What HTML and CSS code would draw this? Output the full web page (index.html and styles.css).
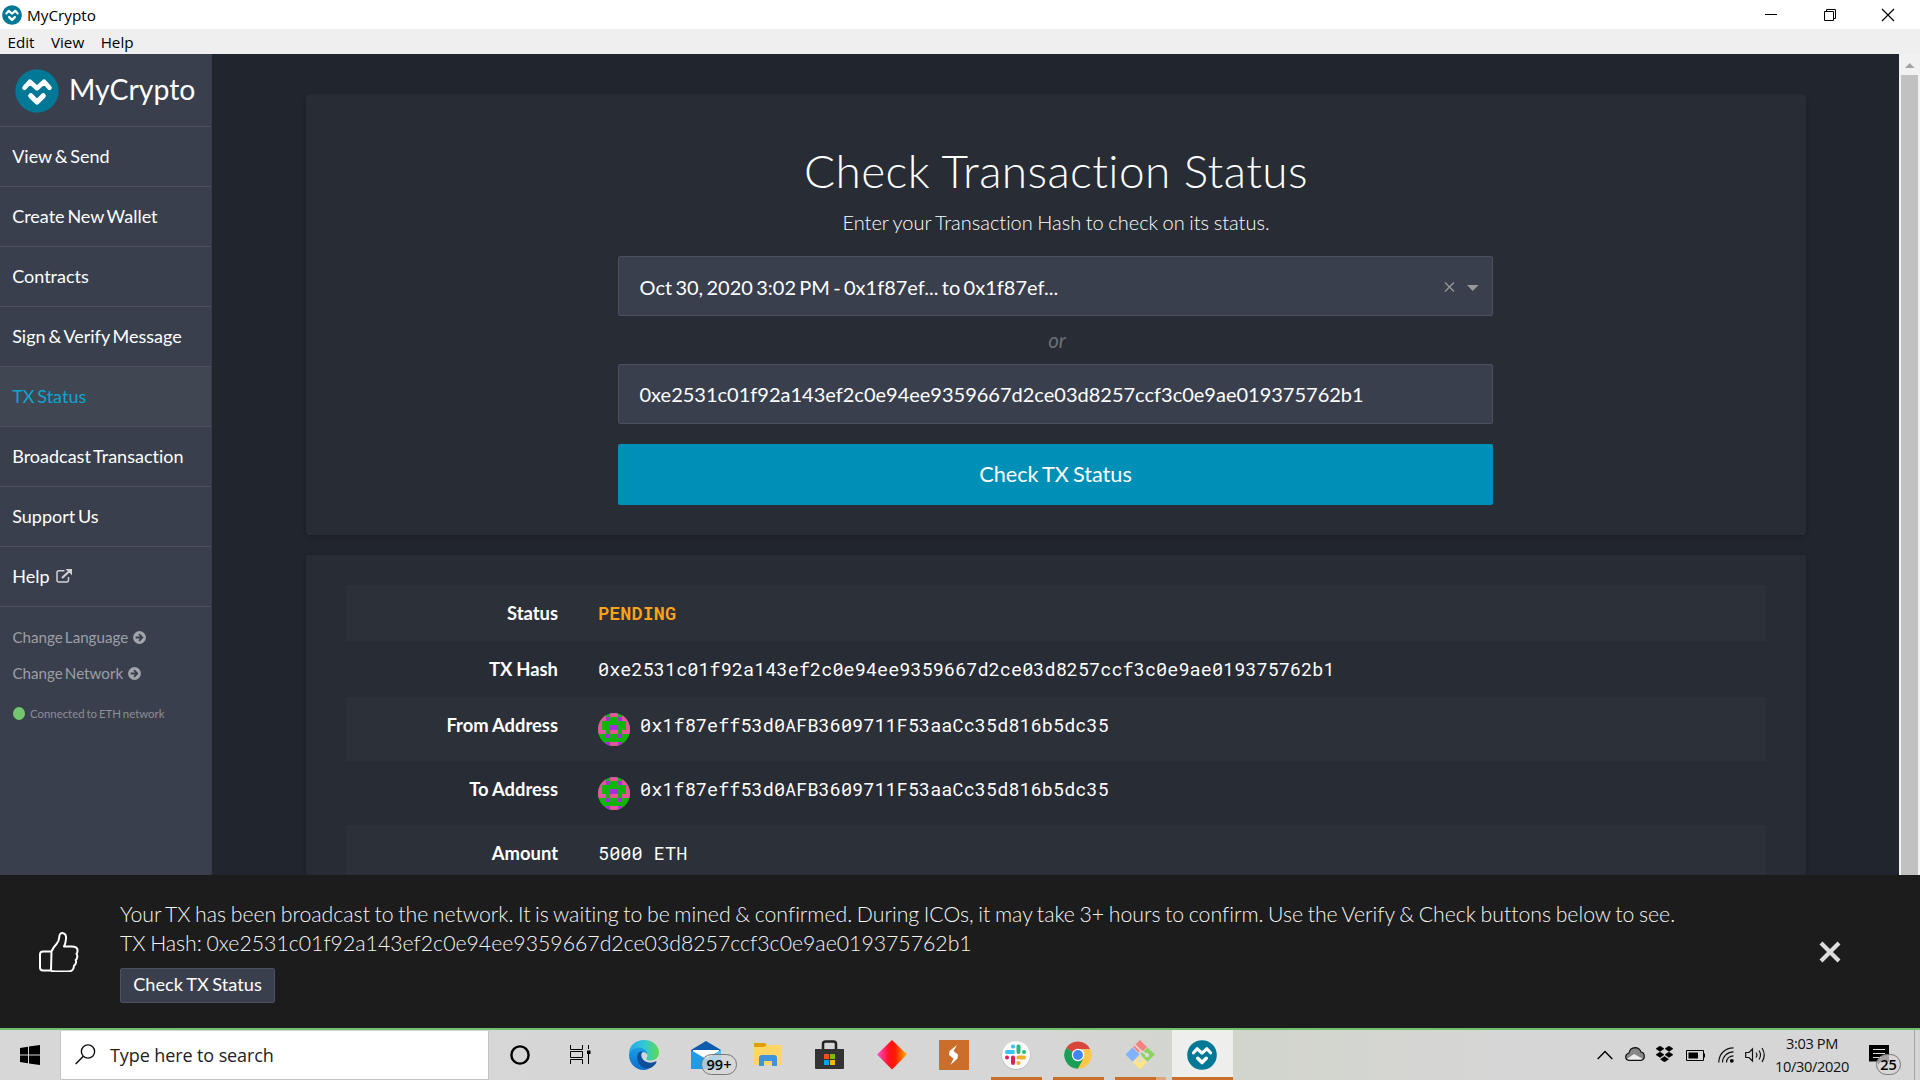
FILE: index.html
```html
<!DOCTYPE html>
<html lang="en">
<head>
<meta charset="utf-8">
<title>MyCrypto</title>
<link rel="stylesheet" href="styles.css">
</head>
<body>
<svg class="defs" aria-hidden="true">
  <symbol id="logo" viewBox="0 0 44 44">
    <circle cx="22" cy="22" r="21.7" fill="#007896"/>
    <path d="M9.500 18.800l5.400-6 7.100 6.400 7.100-6.400 5.400 6" fill="none" stroke="#fff" stroke-width="4.600" stroke-linecap="round" stroke-linejoin="round"/>
    <path d="M15.800 26.800l6.200 6.200 6.200-6.200" fill="none" stroke="#fff" stroke-width="5.200" stroke-linecap="round" stroke-linejoin="round"/>
  </symbol>
  <symbol id="circle-arrow" viewBox="0 0 13 13">
    <circle cx="6.500" cy="6.500" r="6.400" fill="#a2a5ab"/>
    <path d="M2.600 6.500h6.400M6 3.200l3.300 3.300L6 9.800" fill="none" stroke="#3a3f4d" stroke-width="1.800"/>
  </symbol>
  <symbol id="identicon" viewBox="0 0 8 8" preserveAspectRatio="none">
    <g shape-rendering="crispEdges">
    <path fill="#10b50a" d="M0 0h8v8H0z"/>
    <path fill="#e7549b" d="M3 0h2v1H3zM0 0h1v5H0zM7 0h1v5H7zM1 0h1v2H1zM6 0h1v2H6zM1 4h1v1H1zM6 4h1v1H6zM3 4h2v1H3zM3 7h2v1H3z"/>
    <path fill="#a530e0" d="M2 1h1v1H2zM5 1h1v1H5zM3 3h2v1H3zM2 5h1v1H2zM5 5h1v1H5zM2 7h1v1H2zM5 7h1v1H5z"/>
    </g>
  </symbol>
</svg>
<header class="titlebar">
  <svg class="titlebar-logo"><use href="#logo"/></svg>
  <span class="titlebar-name">MyCrypto</span>
  <div class="window-buttons">
    <svg viewBox="0 0 14 14"><path d="M1 6.500h12" stroke="#000"/></svg>
    <svg viewBox="0 0 14 14"><path d="M1.500 3.500h9v9h-9zM3.500 3.500v-2h9v9h-2" fill="none" stroke="#000"/></svg>
    <svg viewBox="0 0 14 14"><path d="M1 1l12 12M13 1L1 13" stroke="#000" stroke-width="1.200"/></svg>
  </div>
</header>
<nav class="menubar"><span>Edit</span><span>View</span><span>Help</span></nav>
<div class="app">
  <aside class="sidebar">
    <div class="brand"><svg class="brand-logo"><use href="#logo"/></svg><span class="brand-name">MyCrypto</span></div>
    <a class="nav-item">View &amp; Send</a>
    <a class="nav-item">Create New Wallet</a>
    <a class="nav-item">Contracts</a>
    <a class="nav-item">Sign &amp; Verify Message</a>
    <a class="nav-item active">TX Status</a>
    <a class="nav-item">Broadcast Transaction</a>
    <a class="nav-item">Support Us</a>
    <a class="nav-item">Help<svg class="external" viewBox="0 0 16 14"><path d="M8.500 1.800H3q-2 0-2 2v7.200q0 2 2 2h7.500q2 0 2-2V8" fill="none" stroke="#d0d2d6" stroke-width="1.500"/><path d="M6 9l7-6.500" stroke="#d0d2d6" stroke-width="2.200"/><path d="M9.500 0H16v6.300z" fill="#d0d2d6"/></svg></a>
    <div class="sub-items">
      <a class="sub-item">Change Language<svg><use href="#circle-arrow"/></svg></a>
      <a class="sub-item">Change Network<svg><use href="#circle-arrow"/></svg></a>
    </div>
    <div class="connection"><i class="dot"></i>Connected to ETH network</div>
  </aside>
  <main class="content">
    <section class="card check">
      <h1>Check Transaction Status</h1>
      <p class="subtitle">Enter your Transaction Hash to check on its status.</p>
      <div class="form">
        <div class="field select"><span>Oct 30, 2020 3:02 PM - 0x1f87ef... to 0x1f87ef...</span>
          <svg class="select-icons" viewBox="0 0 36 14"><path d="M2 2.500l9 9M11 2.500l-9 9" stroke="#999" stroke-width="1.300"/><path d="M24 5h11.500l-5.750 6z" fill="#999"/></svg></div>
        <em class="or">or</em>
        <div class="field">0xe2531c01f92a143ef2c0e94ee9359667d2ce03d8257ccf3c0e9ae019375762b1</div>
        <div class="primary">Check TX Status</div>
      </div>
    </section>
    <section class="card details">
      <div class="row shade"><b>Status</b><code class="pending">PENDING</code></div>
      <div class="row"><b>TX Hash</b><code>0xe2531c01f92a143ef2c0e94ee9359667d2ce03d8257ccf3c0e9ae019375762b1</code></div>
      <div class="row tall shade"><b>From Address</b><svg class="identicon"><use href="#identicon"/></svg><code>0x1f87eff53d0AFB3609711F53aaCc35d816b5dc35</code></div>
      <div class="row tall"><b>To Address</b><svg class="identicon"><use href="#identicon"/></svg><code>0x1f87eff53d0AFB3609711F53aaCc35d816b5dc35</code></div>
      <div class="row shade"><b>Amount</b><code>5000 ETH</code></div>
    </section>
  </main>
  <div class="scrollbar"><svg viewBox="0 0 21 21"><path d="M6 14h9.500l-4.750-5z" fill="#a3a3a3"/></svg><div class="thumb"></div></div>
</div>
<section class="toast">
  <svg class="thumb-up" viewBox="0 0 40 40"><path fill="none" stroke="#fff" stroke-width="2" stroke-linejoin="round" d="M12.500 19.500H4q-3 0-3 3v13q0 3 3 3h8zM12.500 19.500q2-4.500 5-7.500 2.500-3 2.700-6.500.2-4.700 3.300-4.500 4.200.8 3.500 6-.5 5-2 7.500h7.500q6.500 0 6 4.500 0 2-1 2.800 1.200 1.500.7 3.500-.4 2-1.500 2.700.9 2-.2 4-.6 1.200-1.500 1.700-.3 5.800-6 5.800H17q-3 0-5-.5"/></svg>
  <div class="toast-body">
    <p>Your TX has been broadcast to the network. It is waiting to be mined &amp; confirmed. During ICOs, it may take 3+ hours to confirm. Use the Verify &amp; Check buttons below to see.</p>
    <p>TX Hash: 0xe2531c01f92a143ef2c0e94ee9359667d2ce03d8257ccf3c0e9ae019375762b1</p>
    <div class="toast-button">Check TX Status</div>
  </div>
  <svg class="toast-close" viewBox="0 0 22 22"><path d="M2 2l18 18M20 2L2 20" stroke="#ddd" stroke-width="4.200"/></svg>
</section>
<footer class="taskbar">
  <div class="start"><svg viewBox="0 0 20 20"><path d="M0 3l8-1.200V9.500H0zM9 1.600L20 0v9.500H9zM0 10.500h8v7.700L0 17zM9 10.500h11V20L9 18.400z"/></svg></div>
  <div class="search"><svg viewBox="0 0 21 21"><circle cx="13" cy="7.500" r="6.600" fill="none" stroke="#111" stroke-width="1.400"/><path d="M8.300 12.300L.7 20" stroke="#111" stroke-width="1.500"/></svg><span>Type here to search</span></div>
  <div class="apps">
    <div class="slot"><svg viewBox="0 0 30 30"><circle cx="15" cy="15" r="8.600" fill="none" stroke="#000" stroke-width="2.400"/></svg></div>
    <div class="slot"><svg viewBox="0 0 30 30"><path d="M3.500 5v4.500h12V5M3.500 24v-4.500h12V24M3.500 11.500h12v6h-12zM21.500 5v4M21.500 14v10" fill="none" stroke="#000"/><path d="M20 10.500h3.500v3.500H20z"/></svg></div>
    <div class="slot"><svg viewBox="0 0 30 30">
      <defs><linearGradient id="edge-top"><stop stop-color="#27a8e8"/><stop offset=".5" stop-color="#31c7d8"/><stop offset="1" stop-color="#5bdc50"/></linearGradient><linearGradient id="edge-left" x2="0" y2="1"><stop stop-color="#1b9de2"/><stop offset="1" stop-color="#0b6fcb"/></linearGradient></defs>
      <path fill="url(#edge-top)" d="M0 14C0 5 7 0 15 0c9 0 15 6 15 12.500 0 5-4 8-8.500 8-3.500 0-5-1.300-3.600-3 1.800-3.500-.5-7.500-6.400-7.500C6 10 2 11.500 0 14z"/>
      <path fill="url(#edge-left)" d="M0 15C1 10 6 7.500 10 7.700c5 .3 8.500 3.800 8.400 7.300-1-3-5-4-6.500-1C9 20 13 27 20 28.800 17 30 16 30 15 30 6 30 0 23 0 15z"/>
      <path fill="#0e4f9c" d="M9 13.500C6 21 12 29 19.500 28.800c3.500-1 6.500-3.500 8-6.500.4-.8-.2-1.100-1-.7C20 24.500 12.500 21 12.300 15c0-2 .7-3 1.500-3.500-2 0-4 .5-4.800 2z"/></svg></div>
    <div class="slot mail"><svg viewBox="0 0 30 30"><path fill="#0f5cae" d="M0 10L15 1l15 9v6H0z"/><path fill="#fff" d="M2 10h26v10H2z"/><path fill="#1e9de6" d="M0 10l15 9 15-9v19H0z"/><path fill="#55c3f3" d="M30 10v19L12 17l3 2z"/></svg><span class="badge">99+</span></div>
    <div class="slot"><svg viewBox="0 0 30 30"><path fill="#e39d07" d="M1 3h11l2 2.500V10H1z"/><path fill="#ffd664" d="M1 7h10l3-2h14.500v20H1z"/><path fill="#3f92dc" d="M6 26V18q0-3 3-3h12q3 0 3 3v8h-5v-5h-8v5z"/></svg></div>
    <div class="slot"><svg viewBox="0 0 30 30"><path fill="none" stroke="#222" stroke-width="2.500" d="M8 10V4q0-2.500 2.500-2.500h8Q21 1.500 21 4v6"/><path fill="#333" d="M0 9h29v19q0 1-1 1H1q-1 0-1-1z"/><path fill="#f25022" d="M9 14h5v5H9z"/><path fill="#7fba00" d="M15 14h5v5h-5z"/><path fill="#00a4ef" d="M9 20h5v5H9z"/><path fill="#ffb900" d="M15 20h5v5h-5z"/></svg></div>
    <div class="slot"><svg viewBox="0 0 30 30"><defs><linearGradient id="gem"><stop stop-color="#ff4fd8"/><stop offset=".4" stop-color="#ff1020"/><stop offset=".6" stop-color="#ff1800"/><stop offset="1" stop-color="#ffb400"/></linearGradient></defs><path fill="url(#gem)" d="M15 0l15 14.500L15 29.500 0 14.500z"/></svg></div>
    <div class="slot"><svg viewBox="0 0 30 30"><path fill="#cc6e2b" d="M0 0h30v30H0z"/><path fill="#fff" d="M18 5l-7.500 6-.5 4 4.500 3.500-3 6.500 7-6.500.5-4-4.500-3.500z"/></svg></div>
    <div class="slot running"><svg viewBox="0 0 30 30"><circle cx="15" cy="15.500" r="14.500" fill="#bcbcbc"/><circle cx="15" cy="15" r="14" fill="#fafafa"/><g stroke-width="4" stroke-linecap="round"><path d="M6 12h6M12 6.500v0" stroke="#36c5f0"/><path d="M17.500 6.500v5.500M23 12v0" stroke="#2eb67d"/><path d="M17.500 17.500H23M17.500 23v0" stroke="#ecb22e"/><path d="M12 17.500V23M6 17.500v0" stroke="#e01e5a"/></g></svg></div>
    <div class="slot running"><svg viewBox="0 0 30 30"><path fill="#d9453b" d="M15 15L3.200 8A13.700 13.700 0 0 1 27.200 9.200H15z"/><path fill="#fdc84a" d="M15 15l12.200-5.800A13.700 13.700 0 0 1 15 28.700l-1-4z"/><path fill="#1a9e58" d="M15 15L3.200 8A13.700 13.700 0 0 0 15 28.700L20.500 19z"/><path fill="#fdc84a" d="M20.500 9.200h6.700A13.700 13.700 0 0 1 15 28.700L20.700 18z"/><circle cx="15" cy="15" r="6.200" fill="#fff"/><circle cx="15" cy="15" r="5" fill="#4285f4"/></svg></div>
    <div class="slot running stacked"><svg viewBox="0 0 30 30"><path fill="#f88080" d="M15 0l7 7-7 7-7-7z"/><path fill="#80b3ff" d="M7.500 7.500l7 7-7 7-7-7z"/><path fill="#8dd35f" d="M22.500 7.500l7.500 7-7.500 7-7-7z"/><path fill="#ffe680" d="M15 15.500l7 7-7 7-7-7z"/><path d="M10 5l5 5v12M15 10l7 5" fill="none" stroke="#dcdcd8" stroke-width="1.600"/><circle cx="15" cy="21" r="2.200" fill="#dcdcd8"/><circle cx="22" cy="15" r="2.200" fill="#dcdcd8"/></svg></div>
    <div class="slot running current"><svg><use href="#logo"/></svg></div>
  </div>
  <div class="tray">
    <svg class="chevron" viewBox="0 0 16 10"><path d="M.7 9L8 1.500 15.300 9" fill="none" stroke="#000" stroke-width="1.400"/></svg>
    <svg class="cloud" viewBox="0 0 20 14"><path d="M4 13.300Q.7 13 .7 9.800.8 7 4 6q1-5 6-5.300 4.500 0 6 4.300 3.300.6 3.300 4.200 0 3.800-3.500 4.100z" fill="#888"/><path d="M2 12l7-5 9 5-2 1H4z" fill="#eee"/><path d="M4 13.300Q.7 13 .7 9.800.8 7 4 6q1-5 6-5.300 4.500 0 6 4.300 3.300.6 3.300 4.200 0 3.800-3.500 4.100z" fill="none" stroke="#111" stroke-width="1.200"/></svg>
    <svg class="dropbox" viewBox="0 0 19 16"><path d="M5 0l4 2.700-4 2.700-4-2.700zM14 0l4 2.700-4 2.700-4-2.700zM5 6l4 2.700-4 2.700-4-2.700zM14 6l4 2.700-4 2.700-4-2.700zM9.500 10.500l4 2.700-4 2.800-4-2.800z" stroke="#000" stroke-width=".5"/></svg>
    <svg class="battery" viewBox="0 0 19 11"><path d="M.5.500h17v10H.5z" fill="none" stroke="#000"/><path d="M2.500 2.500h9.500v6H2.500zM18 3.500h1v4h-1z"/></svg>
    <svg class="wifi" viewBox="0 0 16 16"><g fill="none" stroke="#111" stroke-width="1.200"><path d="M.8 15.500C.8 7 7 .8 15.500.8"/><path d="M4.500 15.500c0-6 5-10.700 11-10.700"/><path d="M8.500 15.500c0-4 3-6.700 7-6.700"/></g><circle cx="13.800" cy="13.800" r="1.900"/></svg>
    <svg class="speaker" viewBox="0 0 21 16"><path d="M.7 5.500H4L7.500 2v12L4 10.500H.7zM11 5.500q1.800 2.500 0 5M14 3.500q3 4.500 0 9M17 1q4.500 7 0 14" fill="none" stroke="#111" stroke-width="1.200"/></svg>
    <div class="clock"><span>3:03 PM</span><span>10/30/2020</span></div>
    <div class="notifications"><svg viewBox="0 0 20 20"><path d="M0 0h20v16.500H12l-3 3.500v-3.500H0z"/><path d="M4 4.500h12M4 8.500h12M4 12.500h8" stroke="#ddd" stroke-width="1.200"/></svg><span class="badge">25</span></div>
    <div class="show-desktop"></div>
  </div>
</footer>
</body>
</html>
```
FILE: styles.css
```css
* { box-sizing: border-box; }
body {
  margin: 0;
  width: 1920px;
  height: 1080px;
  overflow: hidden;
  display: flex;
  flex-direction: column;
  font-family: Lato, sans-serif;
  font-variant-ligatures: no-common-ligatures;
  color: #fff;
  background: #21252d;
}
svg { display: block; flex: none; }
p, h1 { margin: 0; font-weight: 300; }
.defs { display: none; }

/* Window chrome */
.titlebar {
  display: flex;
  align-items: center;
  flex: none;
  height: 29px;
  padding: 0 25px 0 2px;
  background: #fff;
  color: #000;
  font: 15.3px/29px "Open Sans", sans-serif;
}
.titlebar-logo { width: 20px; height: 20px; }
.titlebar-name { margin-left: 5px; padding-top: 2px; }
.window-buttons { display: flex; gap: 45px; margin-left: auto; }
.window-buttons svg { width: 14px; height: 14px; }
.window-buttons svg:nth-child(2) { margin-right: -1px; }
.menubar {
  display: flex;
  flex: none;
  gap: 16.5px;
  height: 25px;
  padding-left: 7.5px;
  background: #efefef;
  color: #000;
  font: 15.2px/27px "Open Sans", sans-serif;
}

.app { display: flex; height: 821px; flex: none; overflow: hidden; }

/* Sidebar */
.sidebar {
  width: 212px;
  flex: none;
  background: #3a3f4d;
  border-right: 1px solid #353a47;
  word-spacing: -1.8px;
}
.brand {
  display: flex;
  align-items: center;
  gap: 10px;
  height: 73px;
  padding: 2px 0 0 15px;
  border-bottom: 1px solid #4d505f;
}
.brand-logo { width: 44px; height: 44px; }
.brand-name { font-size: 28.4px; line-height: 40px; padding-bottom: 5px; }
.nav-item {
  display: flex;
  align-items: center;
  height: 60px;
  padding: 0 12px 1px 12.2px;
  border-bottom: 1px solid #4d505f;
  font-size: 18px;
}
.nav-item.active { background: #414653; color: #0ea5cd; }
.external { width: 16px; height: 14px; margin-left: 6px; }
.sub-items { padding-top: 12px; color: #9c9fa6; }
.sub-item {
  display: flex;
  align-items: center;
  height: 36px;
  padding-left: 12.5px;
  font-size: 15.15px;
}
.sub-item svg { width: 13px; height: 13px; margin-left: 5px; }
.connection {
  display: flex;
  align-items: center;
  gap: 5px;
  height: 16px;
  margin-top: 14px;
  padding-left: 13px;
  font-size: 11.4px;
  word-spacing: -1px;
  color: #8b8e96;
}
.dot { width: 12px; height: 13px; border-radius: 50%; background: #73c66d; }

/* Content */
.content { flex: 1; padding: 40px 93px 0 94px; background: #21252d; }
.card {
  background: #282c35;
  border-radius: 3px;
  box-shadow: 0 2px 5px rgba(0, 0, 0, .2);
}
.check { height: 441px; padding-top: 46px; text-align: center; }
h1 { font-size: 46px; line-height: 61px; letter-spacing: .4px; }
.subtitle { margin-top: 6px; font-size: 20px; line-height: 30px; word-spacing: -.9px; }
.form {
  display: flex;
  flex-direction: column;
  width: 875px;
  margin: 19px 0 0 312px;
  word-spacing: -1.5px;
  text-align: left;
}
.field {
  display: flex;
  align-items: center;
  height: 60px;
  padding: 0 13px 0 20.5px;
  border: 1px solid #4b5063;
  border-radius: 2px;
  background: #3a3f4d;
  font-size: 20px;
}
.select { justify-content: space-between; padding-top: 1px; word-spacing: -1.8px; }
.select-icons { width: 36px; height: 14px; }
.or { height: 48px; padding-left: 3px; font-size: 20.5px; line-height: 48px; text-align: center; color: #6b6f76; }
.primary {
  height: 61px;
  margin-top: 20px;
  border-radius: 2px;
  background: #0090b7;
  font-size: 21.7px;
  line-height: 60px;
  text-align: center;
}
.details { height: 600px; margin-top: 20px; padding: 30px 40px 0; }
.row {
  display: grid;
  grid-template-columns: 212px auto 1fr;
  height: 56px;
  line-height: 56px;
}
.row b { text-align: right; font-size: 18.4px; word-spacing: -.5px; }
.row.tall { height: 64px; }
.shade { background: #2c3039; }
code {
  margin-left: 40px;
  font-family: "Roboto Mono", "DejaVu Sans Mono", monospace;
  font-size: 18.5px;
  letter-spacing: .06px;
}
.identicon { width: 32px; height: 33px; margin: 16px 0 0 40px; border-radius: 50%; }
.identicon + code { margin-left: 10px; }
.pending { color: #ffa31a; font-weight: 600; }

/* Scrollbar */
.scrollbar { width: 21px; flex: none; padding-left: 2px; background: #f1f1f1; }
.scrollbar svg { width: 21px; height: 21px; margin-left: -2px; }
.thumb { width: 17px; height: 800px; background: #c1c1c1; }

/* Toast */
.toast {
  display: flex;
  flex: none;
  height: 155px;
  padding: 25px 79px 0 39px;
  border-bottom: 2px solid #6cc16a;
  background: #1c1c1c;
}
.thumb-up { width: 40px; height: 40px; margin: 32px 41px 0 0; }
.toast-body p { font-size: 21.25px; line-height: 29px; word-spacing: -1.18px; white-space: nowrap; color: #f4f4f4; }
.toast-button {
  width: 155px;
  height: 35px;
  margin-top: 10px;
  border: 1px solid #4b5063;
  border-radius: 2px;
  background: #3a3f4d;
  font-size: 18.2px;
  line-height: 31px;
  word-spacing: -1px;
  text-align: center;
}
.toast-close { width: 22px; height: 22px; margin: 41px 0 0 auto; }

/* Taskbar */
.taskbar {
  display: flex;
  flex: none;
  height: 50px;
  background: linear-gradient(90deg, #d7d7d7 0, #d6d6d6 1040px, #d2d5cc 1250px, #d6d6d6 1500px);
  color: #111;
  font-family: "Open Sans", sans-serif;
}
.start { width: 60px; padding: 15px 0 0 20px; }
.start svg { width: 20px; height: 20px; }
.search {
  display: flex;
  width: 429px;
  height: 49px;
  margin-top: 1px;
  padding: 13px 0 0 14px;
  border: 1px solid #c4c4c4;
  border-top: 0;
  background: #fff;
  font-size: 18px;
  line-height: 22px;
  letter-spacing: -.1px;
  color: #222;
}
.search svg { width: 21px; height: 21px; margin-right: 14px; }
.apps { display: grid; grid-template-columns: repeat(12, 62px); }
.slot { position: relative; display: flex; justify-content: center; padding-top: 10px; }
.slot svg { width: 30px; height: 30px; }
.running::after {
  content: "";
  position: absolute;
  left: 6px;
  right: 5px;
  bottom: 0;
  height: 3px;
  background: #cc6e2b;
}
.stacked::after { background: linear-gradient(90deg, #cc6e2b 41px, #dfa57c 41px); }
.current { background: linear-gradient(#eeeeec, #eeeeec) 1px 0 no-repeat; }
.current::after { left: 1px; right: 0; }
.badge {
  position: absolute;
  border: 1px solid #777;
  border-radius: 12px;
  background: rgba(215, 215, 215, .75);
  color: #000;
  font-size: 14.5px;
  font-weight: 600;
  text-align: center;
}
.mail .badge { left: 26px; top: 24px; width: 36px; height: 21px; line-height: 19px; }
.tray { display: flex; flex: 1; padding-left: 364px; }
.chevron { width: 16px; height: 10px; margin-top: 20px; }
.cloud { width: 20px; height: 14px; margin: 17px 0 0 12px; }
.dropbox { width: 19px; height: 16px; margin: 16px 0 0 10px; }
.battery { width: 19px; height: 11px; margin: 20px 0 0 12px; }
.wifi { width: 16px; height: 16px; margin: 17px 0 0 13px; }
.speaker { width: 21px; height: 16px; margin: 17px 0 0 11px; }
.clock {
  display: flex;
  flex-direction: column;
  width: 84px;
  margin-left: 4px;
  padding-top: 2px;
  font-size: 14.6px;
  line-height: 23px;
  letter-spacing: -.35px;
  text-align: center;
}
.notifications { position: relative; width: 45px; padding: 15px 0 0 15px; }
.notifications svg { width: 20px; height: 20px; }
.notifications .badge { left: 22px; top: 24px; width: 25px; height: 21px; line-height: 19px; }
.show-desktop { width: 6px; margin-left: auto; border-left: 1px solid #a5a5a5; }
```
